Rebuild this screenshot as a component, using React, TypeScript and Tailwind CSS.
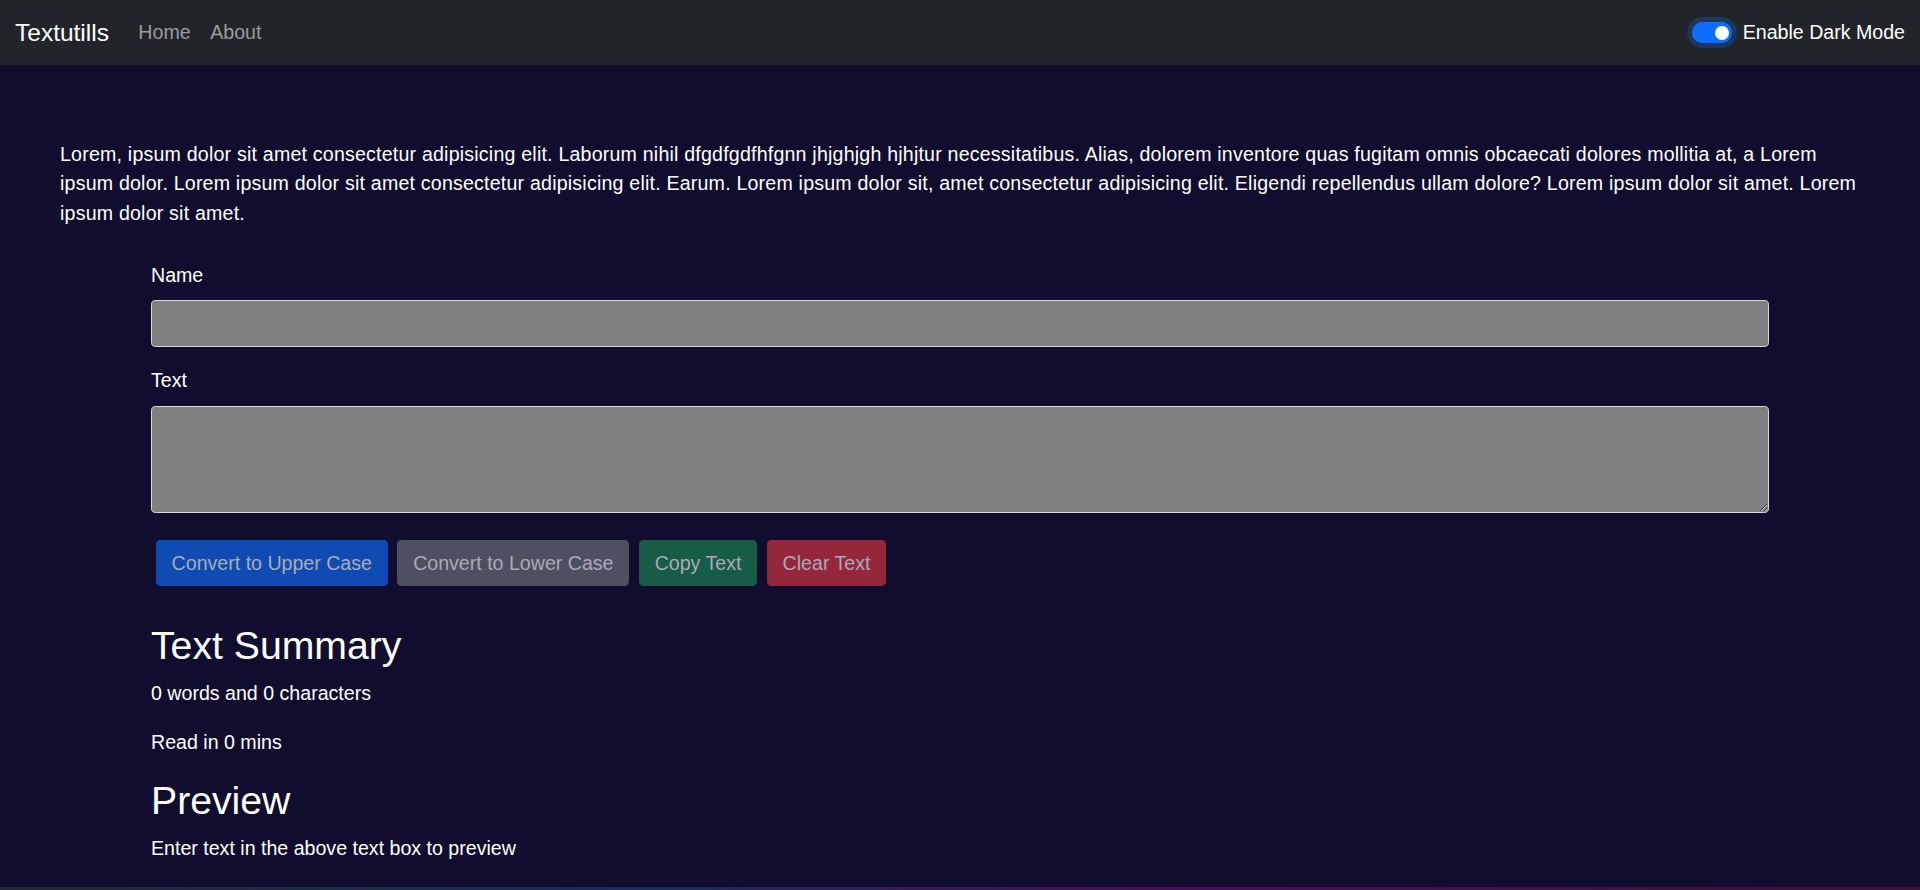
import { useState } from 'react'

const FONT = "font-['Liberation_Sans','Segoe_UI',Arial,sans-serif]"

function Navbar() {
  return (
    <nav className="flex h-[65px] items-center justify-between bg-[#212529] px-[15px]">
      <div className="flex items-center">
        <a href="#" className="mr-[19.6px] text-[24.5px] leading-[36px] text-white">
          Textutills
        </a>
        <ul className="flex items-center">
          <li>
            <a href="#" className="block px-[9.8px] text-[19.6px] leading-[29.4px] text-[#9a9c9f]">
              Home
            </a>
          </li>
          <li>
            <a href="#" className="block px-[9.8px] text-[19.6px] leading-[29.4px] text-[#9a9c9f]">
              About
            </a>
          </li>
        </ul>
      </div>
      <label className="flex items-center gap-[11px] text-[19.6px] leading-[29.4px] text-white">
        <span className="flex h-[20.5px] w-[40px] items-center justify-end rounded-full bg-[#0d6efd] px-[3px] shadow-[0_0_0_4.9px_#1c375e]">
          <span className="h-[14px] w-[14px] rounded-full bg-white" />
        </span>
        Enable Dark Mode
      </label>
    </nav>
  )
}

const buttons = [
  { label: 'Convert to Upper Case', cls: 'bg-[#0e4cb4]' },
  { label: 'Convert to Lower Case', cls: 'bg-[#4c5061]' },
  { label: 'Copy Text', cls: 'bg-[#165c47]' },
  { label: 'Clear Text', cls: 'bg-[#95273d]' },
]

export default function App() {
  const [name, setName] = useState('')
  const [text, setText] = useState('')
  const words = text.split(/\s+/).filter((w) => w.length > 0).length

  return (
    <div className={`flex min-h-screen flex-col bg-[#110d2f] ${FONT}`}>
      <Navbar />
      <main className="flex-1 pl-[60px] pr-[50px] pt-[75px] text-white">
        <p className="mb-[32.8px] text-[19.6px] leading-[29.4px] tracking-[0.2px]">
          Lorem, ipsum dolor sit amet consectetur adipisicing elit. Laborum nihil dfgdfgdfhfgnn jhjghjgh hjhjtur
          necessitatibus. Alias, dolorem inventore quas fugitam omnis obcaecati dolores mollitia at, a Lorem ipsum
          dolor. Lorem ipsum dolor sit amet consectetur adipisicing elit. Earum. Lorem ipsum dolor sit, amet
          consectetur adipisicing elit. Eligendi repellendus ullam dolore? Lorem ipsum dolor sit amet. Lorem ipsum
          dolor sit amet.
        </p>

        <div className="ml-[91px] mr-[101px]">
          <label htmlFor="name" className="mb-[9.8px] block text-[19.6px] leading-[29.4px]">
            Name
          </label>
          <input
            id="name"
            value={name}
            onChange={(e) => setName(e.target.value)}
            className="mb-[19.6px] block h-[46.5px] w-full rounded-[4.6px] border border-[#d6d8dc] bg-[#808080] px-[14.7px] text-[19.6px] text-white outline-none"
          />

          <label htmlFor="text" className="mb-[9.8px] block text-[19.6px] leading-[29.4px]">
            Text
          </label>
          <textarea
            id="text"
            value={text}
            onChange={(e) => setText(e.target.value)}
            className="block h-[107px] w-full rounded-[4.6px] border border-[#d6d8dc] bg-[#808080] px-[14.7px] py-[7px] text-[19.6px] text-white outline-none"
          />

          <div className="mt-[23px] flex">
            {buttons.map((b) => (
              <button
                key={b.label}
                type="button"
                disabled
                className={`mx-[4.9px] my-[4.9px] rounded-[4.6px] border border-transparent px-[14.7px] py-[7.3px] text-[19.6px] leading-[29.4px] text-[#abaab6] ${b.cls}`}
              >
                {b.label}
              </button>
            ))}
          </div>

          <h2 className="mt-[31px] mb-[9.8px] text-[39.2px] font-medium leading-[47px]">Text Summary</h2>
          <p className="mb-[19.6px] text-[19.6px] leading-[29.4px]">
            {words} words and {text.length} characters
          </p>
          <p className="mb-[19.6px] text-[19.6px] leading-[29.4px]">Read in {0.008 * words} mins</p>
          <h2 className="mb-[9.8px] text-[39.2px] font-medium leading-[47px]">Preview</h2>
          <p className="mb-[19.6px] text-[19.6px] leading-[29.4px]">
            {text.length > 0 ? text : 'Enter text in the above text box to preview'}
          </p>
        </div>
      </main>
      <div className="h-[3px] bg-[linear-gradient(to_right,#1f2b2f,#1d2a5e_35%,#4a0c58_60%,#3d1234)]" />
    </div>
  )
}
